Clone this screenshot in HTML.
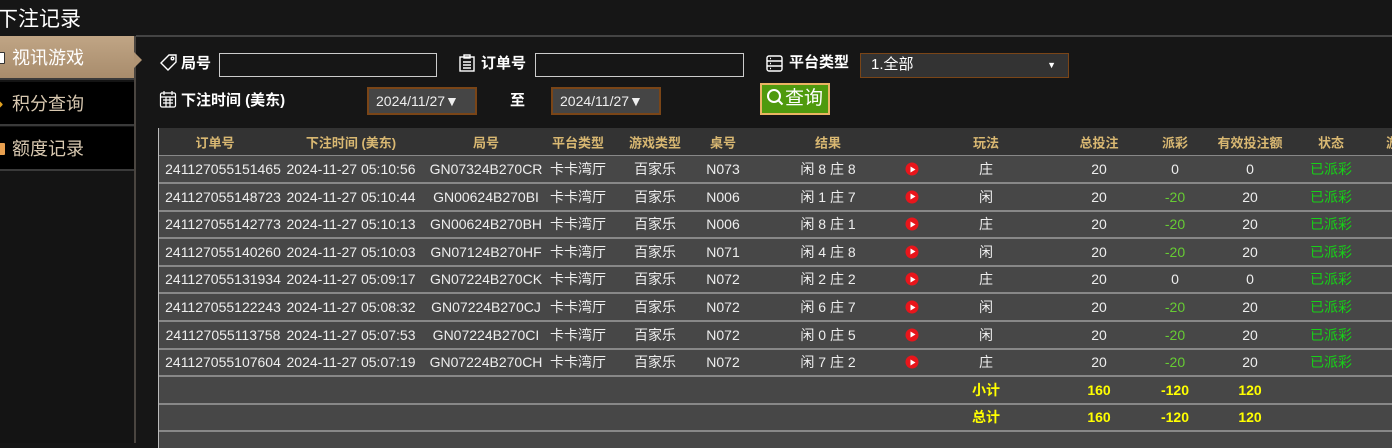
<!DOCTYPE html>
<html><head><meta charset="utf-8"><style>
*{margin:0;padding:0;box-sizing:border-box}
body{width:1392px;height:443px;overflow:hidden;background:#161616;font-family:"Liberation Sans","Noto Sans CJK SC",sans-serif;color:#eee;position:relative}
.a{position:absolute}
.title{left:-3px;top:3px;font-size:21px;color:#fff}
.hline{left:136px;top:35px;width:1256px;height:2px;background:#444}
.side{left:0;top:36px;width:136px;height:407px;background:#141414;border-right:2px solid #4a4540}
.si{position:absolute;left:0;width:134px;height:44px;font-size:18px;line-height:44px;padding-left:12px;color:#d8c8b0;background:#000;border-bottom:2px solid #3a3a3a}
.si.on{background:linear-gradient(#c0a585,#a88c6c);color:#fff}
.si i{position:absolute;left:-3px;top:16px;width:8px;height:12px;border-radius:1px}
.lbl{font-size:15px;font-weight:bold;color:#fff}
.inp{border:1px solid #ccc;background:transparent;height:24px}
.date{background:#454545;border:2px solid #7a4517;height:28px;font-size:14px;color:#eee;line-height:24px;padding-left:7px}
.tbl{left:158px;top:128px;width:1240px;height:320px;background:#474747;border-left:1px solid #bbb}
.hd{left:0;top:0;width:100%;height:28px;background:#333;border-bottom:1px solid #888}
.r{position:absolute;left:0;width:100%;height:28px;border-bottom:2px solid #888;font-size:14px}
.r span,.hd span{position:absolute;top:50%;transform:translate(-50%,-50%);white-space:nowrap}
.hd span{color:#d9b872;font-weight:bold;font-size:13px}
.g{color:#17d017}.m{color:#6c3}
.y{color:#ff0;font-weight:bold}
.ic{width:13px;height:13px;border-radius:50%;background:#e8151b;display:block}
.ic:after{content:"";position:absolute;left:5px;top:3.5px;border-left:5px solid #fff;border-top:3px solid transparent;border-bottom:3px solid transparent}
</style></head><body>
<div class="a title">下注记录</div>
<div class="a hline"></div>
<div class="a side">
<div class="si on" style="top:0"><i style="background:#fff;border:1px solid #333"></i>视讯游戏</div>
<div class="si" style="top:46px"><i style="background:#e0a020;width:5px;height:5px;top:20px;transform:rotate(45deg)"></i>积分查询</div>
<div class="si" style="top:91px"><i style="background:#e8a050"></i>额度记录</div>
</div>
<div class="a" style="left:134px;top:52px;border-left:8px solid #b09474;border-top:8px solid transparent;border-bottom:8px solid transparent"></div>

<svg class="a" style="left:159px;top:52px" width="20" height="20" viewBox="0 0 20 20" fill="none" stroke="#fff" stroke-width="1.4"><path d="M2 11 L10 3 H17 V10 L9 18 Z"/><circle cx="13.5" cy="6.5" r="1.3"/></svg>
<div class="a lbl" style="left:181px;top:52px">局号</div>
<div class="a inp" style="left:219px;top:53px;width:218px"></div>
<svg class="a" style="left:458px;top:53px" width="18" height="20" viewBox="0 0 18 20" fill="none" stroke="#fff" stroke-width="1.4"><rect x="2" y="4" width="14" height="14"/><rect x="6" y="2" width="6" height="3"/><path d="M5 9h8M5 12h8M5 15h8"/></svg>
<div class="a lbl" style="left:481px;top:52px">订单号</div>
<div class="a inp" style="left:535px;top:53px;width:209px"></div>
<svg class="a" style="left:765px;top:54px" width="19" height="19" viewBox="0 0 19 19" fill="none" stroke="#fff" stroke-width="1.4"><rect x="2" y="2" width="15" height="15" rx="2"/><path d="M2 7h15M2 12h15M5 4.5h1M5 9.5h1M5 14.5h1"/></svg>
<div class="a lbl" style="left:789px;top:51px">平台类型</div>
<div class="a" style="left:860px;top:53px;width:209px;height:25px;background:#333;border:1px solid #7a4517;font-size:15px;line-height:22px;padding-left:10px;color:#fff">1.全部<span style="position:absolute;right:12px;top:0;font-size:9px">▼</span></div>

<svg class="a" style="left:159px;top:90px" width="18" height="19" viewBox="0 0 18 19" fill="none" stroke="#fff" stroke-width="1.2"><rect x="1.5" y="3" width="15" height="14" rx="1.5"/><path d="M1.5 7h15M5 1v4M13 1v4M4 10h10M4 13h10M7 7v10M11 7v10"/></svg>
<div class="a lbl" style="left:181px;top:89px">下注时间 (美东)</div>
<div class="a date" style="left:367px;top:87px;width:110px">2024/11/27▼</div>
<div class="a lbl" style="left:510px;top:89px">至</div>
<div class="a date" style="left:551px;top:87px;width:110px">2024/11/27▼</div>
<div class="a" style="left:760px;top:83px;width:70px;height:32px;background:#4f9a0e;border:2px solid #eab463;font-size:19px;color:#fff;line-height:27px;padding-left:4px"><svg style="vertical-align:-3px" width="19" height="19" viewBox="0 0 19 19" fill="none" stroke="#fff" stroke-width="2"><circle cx="8" cy="8" r="6"/><path d="M12.5 12.5l4 4"/></svg>查询</div>

<div class="a tbl">
<div class="a hd"><span style="left:56px">订单号</span><span style="left:192px">下注时间 (美东)</span><span style="left:327px">局号</span><span style="left:419px">平台类型</span><span style="left:496px">游戏类型</span><span style="left:564px">桌号</span><span style="left:669px">结果</span><span style="left:827px">玩法</span><span style="left:940px">总投注</span><span style="left:1016px">派彩</span><span style="left:1091px">有效投注额</span><span style="left:1172px">状态</span><span style="left:1240px">游戏</span></div>
<div class="r" style="top:28px"><span style="left:64px">241127055151465</span><span style="left:192px">2024-11-27 05:10:56</span><span style="left:327px">GN07324B270CR</span><span style="left:419px">卡卡湾厅</span><span style="left:496px">百家乐</span><span style="left:564px">N073</span><span style="left:669px">闲 8 庄 8</span><span class="ic" style="left:753px"></span><span style="left:827px">庄</span><span style="left:940px">20</span><span style="left:1016px">0</span><span style="left:1091px">0</span><span class="g" style="left:1172px">已派彩</span></div>
<div class="r" style="top:55.6px"><span style="left:64px">241127055148723</span><span style="left:192px">2024-11-27 05:10:44</span><span style="left:327px">GN00624B270BI</span><span style="left:419px">卡卡湾厅</span><span style="left:496px">百家乐</span><span style="left:564px">N006</span><span style="left:669px">闲 1 庄 7</span><span class="ic" style="left:753px"></span><span style="left:827px">闲</span><span style="left:940px">20</span><span class="m" style="left:1016px">-20</span><span style="left:1091px">20</span><span class="g" style="left:1172px">已派彩</span></div>
<div class="r" style="top:83.2px"><span style="left:64px">241127055142773</span><span style="left:192px">2024-11-27 05:10:13</span><span style="left:327px">GN00624B270BH</span><span style="left:419px">卡卡湾厅</span><span style="left:496px">百家乐</span><span style="left:564px">N006</span><span style="left:669px">闲 8 庄 1</span><span class="ic" style="left:753px"></span><span style="left:827px">庄</span><span style="left:940px">20</span><span class="m" style="left:1016px">-20</span><span style="left:1091px">20</span><span class="g" style="left:1172px">已派彩</span></div>
<div class="r" style="top:110.8px"><span style="left:64px">241127055140260</span><span style="left:192px">2024-11-27 05:10:03</span><span style="left:327px">GN07124B270HF</span><span style="left:419px">卡卡湾厅</span><span style="left:496px">百家乐</span><span style="left:564px">N071</span><span style="left:669px">闲 4 庄 8</span><span class="ic" style="left:753px"></span><span style="left:827px">闲</span><span style="left:940px">20</span><span class="m" style="left:1016px">-20</span><span style="left:1091px">20</span><span class="g" style="left:1172px">已派彩</span></div>
<div class="r" style="top:138.4px"><span style="left:64px">241127055131934</span><span style="left:192px">2024-11-27 05:09:17</span><span style="left:327px">GN07224B270CK</span><span style="left:419px">卡卡湾厅</span><span style="left:496px">百家乐</span><span style="left:564px">N072</span><span style="left:669px">闲 2 庄 2</span><span class="ic" style="left:753px"></span><span style="left:827px">庄</span><span style="left:940px">20</span><span style="left:1016px">0</span><span style="left:1091px">0</span><span class="g" style="left:1172px">已派彩</span></div>
<div class="r" style="top:166px"><span style="left:64px">241127055122243</span><span style="left:192px">2024-11-27 05:08:32</span><span style="left:327px">GN07224B270CJ</span><span style="left:419px">卡卡湾厅</span><span style="left:496px">百家乐</span><span style="left:564px">N072</span><span style="left:669px">闲 6 庄 7</span><span class="ic" style="left:753px"></span><span style="left:827px">闲</span><span style="left:940px">20</span><span class="m" style="left:1016px">-20</span><span style="left:1091px">20</span><span class="g" style="left:1172px">已派彩</span></div>
<div class="r" style="top:193.6px"><span style="left:64px">241127055113758</span><span style="left:192px">2024-11-27 05:07:53</span><span style="left:327px">GN07224B270CI</span><span style="left:419px">卡卡湾厅</span><span style="left:496px">百家乐</span><span style="left:564px">N072</span><span style="left:669px">闲 0 庄 5</span><span class="ic" style="left:753px"></span><span style="left:827px">闲</span><span style="left:940px">20</span><span class="m" style="left:1016px">-20</span><span style="left:1091px">20</span><span class="g" style="left:1172px">已派彩</span></div>
<div class="r" style="top:221.2px"><span style="left:64px">241127055107604</span><span style="left:192px">2024-11-27 05:07:19</span><span style="left:327px">GN07224B270CH</span><span style="left:419px">卡卡湾厅</span><span style="left:496px">百家乐</span><span style="left:564px">N072</span><span style="left:669px">闲 7 庄 2</span><span class="ic" style="left:753px"></span><span style="left:827px">庄</span><span style="left:940px">20</span><span class="m" style="left:1016px">-20</span><span style="left:1091px">20</span><span class="g" style="left:1172px">已派彩</span></div>
<div class="r" style="top:248.8px"><span class="y" style="left:827px">小计</span><span class="y" style="left:940px">160</span><span class="y" style="left:1016px">-120</span><span class="y" style="left:1091px">120</span></div>
<div class="r" style="top:276.4px"><span class="y" style="left:827px">总计</span><span class="y" style="left:940px">160</span><span class="y" style="left:1016px">-120</span><span class="y" style="left:1091px">120</span></div>
</div>
</body></html>
